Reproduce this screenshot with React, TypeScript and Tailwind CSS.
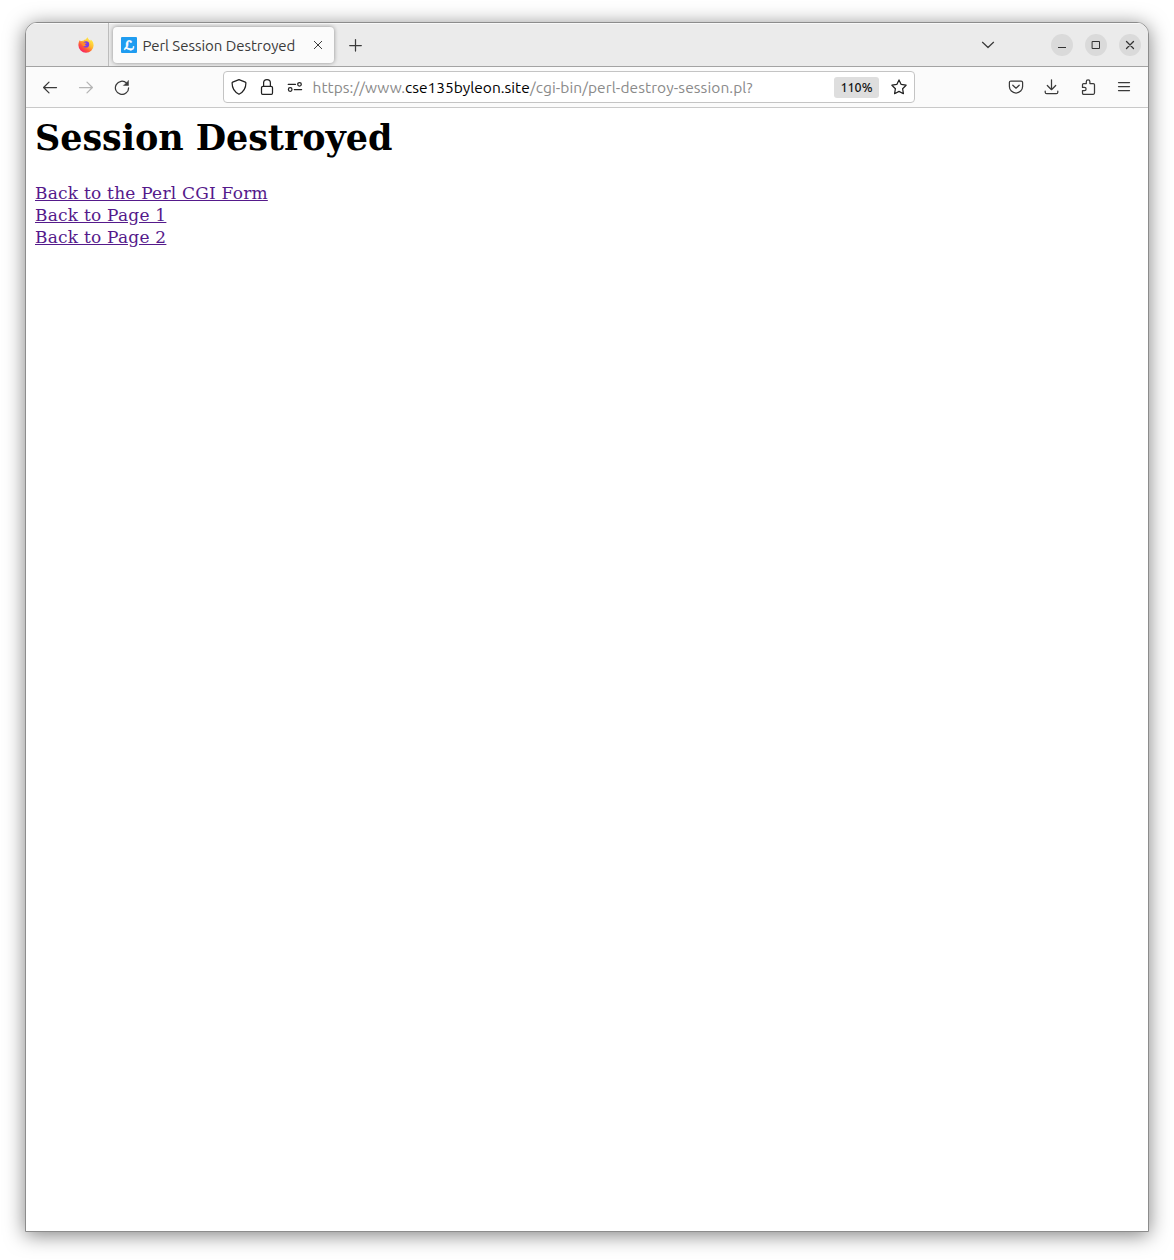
import type { ReactNode } from "react";

function Icon({ children, className = "", size = 16 }: { children: ReactNode; className?: string; size?: number }) {
  return (
    <svg
      width={size}
      height={size}
      viewBox="0 0 16 16"
      fill="none"
      stroke="currentColor"
      strokeWidth="1.25"
      strokeLinecap="round"
      strokeLinejoin="round"
      className={`block shrink-0 ${className}`}
    >
      {children}
    </svg>
  );
}

function Firefox() {
  return (
    <svg width="16" height="16" viewBox="0 0 16 16" className="block">
      <defs>
        <linearGradient id="flame" x1="0.85" y1="0.1" x2="0.2" y2="0.95">
          <stop offset="0" stopColor="#fff04a" />
          <stop offset="0.4" stopColor="#ffb82e" />
          <stop offset="0.68" stopColor="#ff5a36" />
          <stop offset="1" stopColor="#f5196b" />
        </linearGradient>
      </defs>
      <path
        d="M1.7 3.2 2.9 4.3C3.5 3.7 4.3 3.6 5 3.9 6 2.8 7 2.5 8 2.5 8.2 1.7 8.8.8 9.7.3c.1 1.7 1.4 2.5 2.5 3.5.5-.3.6-.8.6-1.3 1.8 1.3 2.9 3.6 2.8 6A7.6 7.6 0 0 1 8 15.8 7.6 7.6 0 0 1 .4 8.3c0-2 .5-3.7 1.3-5.1Z"
        fill="url(#flame)"
      />
      <circle cx="8.1" cy="7.4" r="3.1" fill="#7a3de8" />
      <path d="M3.4 6.1c1-1 2.6-.9 3.6-.3.7 0 1.4 0 1.5.4-.2.5-1.3.6-1.5 1.1 0 .7.5 1 1.300.8-.6 1.200-2.200 1.500-3.200.8C4.300 8.200 4 7 3.400 6.100Z" fill="#ff8a2a" />
    </svg>
  );
}

function WindowButton({ children }: { children: ReactNode }) {
  return (
    <div className="flex size-[22px] items-center justify-center rounded-full bg-[#dadada] text-[#333]">{children}</div>
  );
}

function TabBar() {
  return (
    <div className="flex h-[44px] items-center border-b border-[#a3a3a3] bg-[#ebebeb] text-[#3a3a3a] shadow-[inset_0_1px_0_#f8f8f8]">
      <div className="flex h-full w-[83px] items-center justify-end border-r border-[#bdbdbd] pr-[14px]">
        <Firefox />
      </div>
      <div className="ml-[4px] mt-px flex h-[36px] w-[221px] items-center rounded-[4px] bg-[#fbfbfb] pl-[8px] shadow-[0_0_4px_rgba(0,0,0,0.4)]">
        <span className="flex size-4 items-center justify-center rounded-[1px] bg-[#1f9cf0] pt-px font-['DejaVu_Serif','DejaVu_Sans',serif] text-[12.5px] leading-4 font-bold text-white [-webkit-text-stroke:0.5px_white]">
          ℒ
        </span>
        <span className="ml-[5.5px] w-[167.5px] pt-[2px] text-[15px] leading-[20px] tracking-[-0.03px] whitespace-nowrap">Perl Session Destroyed</span>
        <Icon>
          <path d="m4.3 4.3 7.4 7.4M11.7 4.3 4.3 11.7" strokeWidth="1" />
        </Icon>
      </div>
      <Icon className="ml-[13px] mt-px">
        <path d="M8.500 2.500v11.600M2.700 8.500h11.600" />
      </Icon>
      <div className="ml-auto mr-[7px] flex items-center gap-[12px]">
        <Icon className="mr-[43px]">
          <path d="m2.5 5.3 5.5 5.2 5.5-5.2" />
        </Icon>
        <WindowButton>
          <Icon>
            <path d="M4 10.5h8" strokeLinecap="butt" strokeWidth="1" />
          </Icon>
        </WindowButton>
        <WindowButton>
          <Icon>
            <path d="M4.5 4.5h7v7h-7z" strokeWidth="1" />
          </Icon>
        </WindowButton>
        <WindowButton>
          <Icon>
            <path d="m4.5 4.5 7 7M11.5 4.5l-7 7" strokeWidth="1.3" />
          </Icon>
        </WindowButton>
      </div>
    </div>
  );
}

function AddressBar() {
  return (
    <div className="ml-[93px] flex h-[32px] w-[692px] items-center rounded-[4px] border border-[#c4c4c4] bg-white pl-[7px] text-[#222]">
      <Icon>
        <path d="M8 .7 14.3 3.2c.5.2.6.4.6.9 0 5-2.1 8.900-6.900 11.200C3.200 13 1.100 9.100 1.100 4.100c0-.5.1-.7.6-.9Z" />
      </Icon>
      <Icon className="ml-[12px]">
        <rect x="2.500" y="7.300" width="11" height="8.100" rx="1.500" />
        <path d="M4.600 7.300V4.100a3.400 3.400 0 0 1 6.800 0v3.200" />
      </Icon>
      <Icon className="ml-[12px]">
        <circle cx="3.200" cy="10.500" r="1.800" />
        <circle cx="12.500" cy="5.300" r="1.800" />
        <path d="M1.200 5.300h7.300M7.300 10.500h7.300" />
      </Icon>
      <div className="ml-[9.5px] flex w-[521.5px] pt-px text-[15.5px] leading-[20px] whitespace-nowrap text-[#8a8a8a]">
        <span className="w-[92.5px] tracking-[0.05px]">https://www.</span>
        <span className="w-[125px] text-black">cse135byleon.site</span>
        <span className="tracking-[0.08px]">/cgi-bin/perl-destroy-session.pl?</span>
      </div>
      <span className="flex h-[21px] w-[45px] items-center justify-center rounded-[3px] bg-[#dedede] pt-px text-[12.5px] font-medium text-[#111]">
        110%
      </span>
      <Icon className="ml-[12px]">
        <path d="m8 .9 2.200 4.500 4.900.8-3.500 3.500.8 5L8 12.400l-4.400 2.300.8-5L.9 6.200l4.900-.8Z" />
      </Icon>
    </div>
  );
}

function Toolbar() {
  return (
    <div className="flex h-[41px] items-center border-b border-[#c9c9c9] bg-[#fbfbfb] pl-[16px] text-[#3a3a3a]">
      <Icon>
        <path d="M14.500 8.500H1.700M7 3.100 1.600 8.500 7 13.900" />
      </Icon>
      <Icon className="ml-[20px] text-[#b5b5b5]">
        <path d="M1.500 8.500h12.800M9 3.100 14.400 8.500 9 13.900" />
      </Icon>
      <Icon className="ml-[20px]">
        <path d="M14.600 8.900A6.600 6.600 0 1 1 12.600 4.100" />
        <path d="M14.500 1.700v4.800H9.700Z" fill="currentColor" strokeWidth="0.500" />
      </Icon>
      <AddressBar />
      <div className="ml-auto mr-[16px] flex items-center gap-[20px]">
        <Icon>
          <path d="M2.900 2h10.200c.9 0 1.500.6 1.500 1.500v3.900a6.600 6.600 0 0 1-13.200 0V3.500C1.400 2.600 2 2 2.900 2Z" />
          <path d="M4.800 6.200 8 9.200l3.200-3" />
        </Icon>
        <Icon>
          <path d="M7.500 .8v9.600M3.300 6.500 7.500 10.700l4.200-4.200M1.200 12v1.200c0 .9.6 1.500 1.500 1.500h9.600c.9 0 1.500-.6 1.500-1.500V12" />
        </Icon>
        <Icon>
          <path d="M2.500 5.700c0-.7.5-1.200 1.100-1.200h2.700V2.700a1.800 1.800 0 0 1 3.600 0v1.800h3.400c.7 0 1.200.5 1.200 1.200v8.400c0 .7-.5 1.200-1.200 1.200H3.600c-.6 0-1.100-.5-1.100-1.200v-2.500h2a1.600 1.600 0 0 0 0-3.200h-2Z" />
        </Icon>
        <Icon>
          <path d="M2.500 3.500h11M2.500 7.500h11M2.500 11.500h11" />
        </Icon>
      </div>
    </div>
  );
}

const links = ["Back to the Perl CGI Form", "Back to Page 1", "Back to Page 2"];

export default function App() {
  return (
    <div className="h-[1260px] w-[1174px] overflow-hidden bg-white pt-[22px] pl-[25px] font-['Ubuntu','Noto_Sans',sans-serif]">
      <div className="h-[1210px] w-[1124px] overflow-hidden rounded-t-[12px] border border-[#8c8c8c] bg-white shadow-[0_3px_20px_rgba(0,0,0,0.5)]">
        <TabBar />
        <Toolbar />
        <main className="pl-[9px] pt-[9px] font-['DejaVu_Serif',serif]">
          <h1 className="text-[35px] leading-[41px] font-bold tracking-[-0.07px] text-black">Session Destroyed</h1>
          <div className="mt-[24px] flex flex-col items-start text-[17px] leading-[22px] tracking-[0.22px] text-[#551a8b]">
            {links.map((label) => (
              <a key={label} href="#" className="underline">
                {label}
              </a>
            ))}
          </div>
        </main>
      </div>
    </div>
  );
}
